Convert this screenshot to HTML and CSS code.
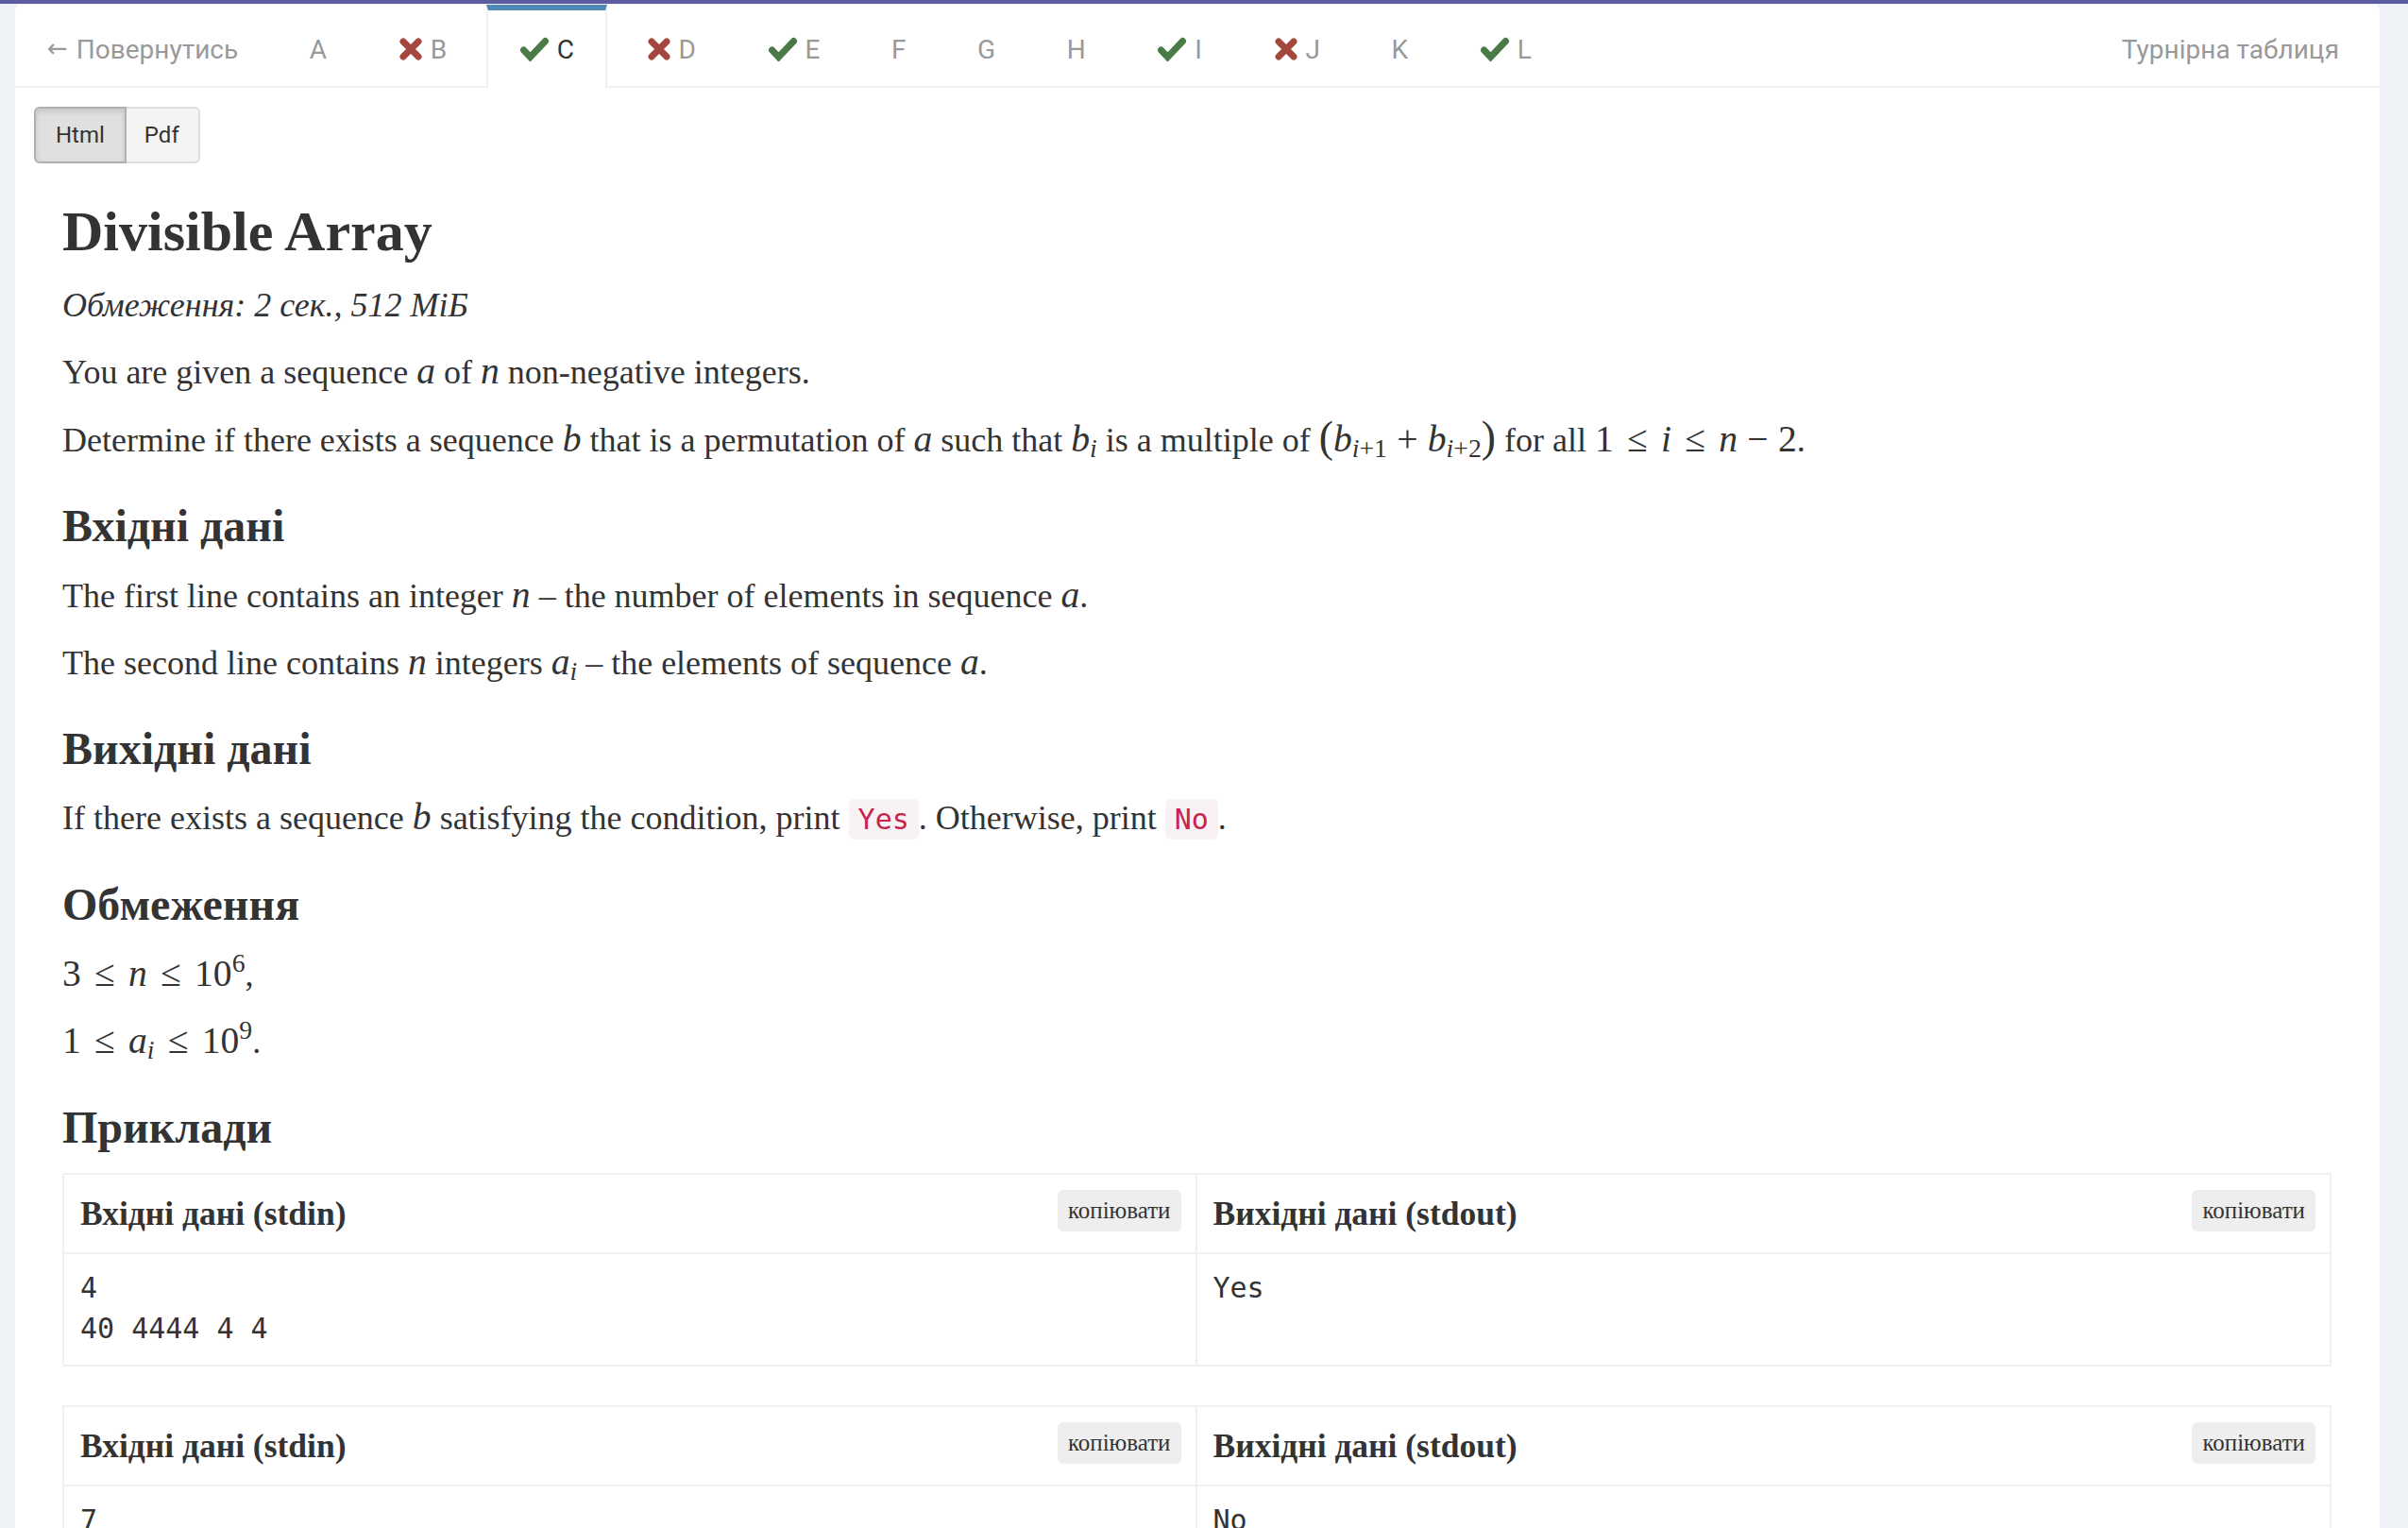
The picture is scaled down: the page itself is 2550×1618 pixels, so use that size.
FILE: index.html
```html
<!DOCTYPE html>
<html lang="uk">
<head>
<meta charset="utf-8">
<title>Divisible Array</title>
<link rel="stylesheet" href="styles.css">
</head>
<body>
<div class="topbar"></div>
<div class="page">
  <div class="card">
    <nav class="tabs">
      <a class="tab back"><span class="arrow">←</span>Повернутись</a>
      <a class="tab">A</a>
      <a class="tab"><svg class="ico ico-x" viewBox="0 0 26 26"><path d="M5 5 L21 21 M21 5 L5 21"/></svg>B</a>
      <a class="tab active"><svg class="ico ico-ok" viewBox="0 0 32 26"><path d="M4.5 14 L11.5 21.5 L27.5 4.5"/></svg>C</a>
      <a class="tab"><svg class="ico ico-x" viewBox="0 0 26 26"><path d="M5 5 L21 21 M21 5 L5 21"/></svg>D</a>
      <a class="tab"><svg class="ico ico-ok" viewBox="0 0 32 26"><path d="M4.5 14 L11.5 21.5 L27.5 4.5"/></svg>E</a>
      <a class="tab">F</a>
      <a class="tab">G</a>
      <a class="tab">H</a>
      <a class="tab"><svg class="ico ico-ok" viewBox="0 0 32 26"><path d="M4.5 14 L11.5 21.5 L27.5 4.5"/></svg>I</a>
      <a class="tab"><svg class="ico ico-x" viewBox="0 0 26 26"><path d="M5 5 L21 21 M21 5 L5 21"/></svg>J</a>
      <a class="tab">K</a>
      <a class="tab"><svg class="ico ico-ok" viewBox="0 0 32 26"><path d="M4.5 14 L11.5 21.5 L27.5 4.5"/></svg>L</a>
      <a class="tab standings">Турнірна таблиця</a>
    </nav>

    <div class="viewbar">
      <div class="btn-group">
        <button class="btn on">Html</button><button class="btn">Pdf</button>
      </div>
    </div>

    <article class="problem">
      <h1>Divisible Array</h1>
      <p class="limits"><em>Обмеження: 2 сек., 512 МіБ</em></p>
      <p>You are given a sequence <span class="math"><i>a</i></span> of <span class="math"><i>n</i></span> non-negative integers.</p>
      <p>Determine if there exists a sequence <span class="math"><i>b</i></span> that is a permutation of <span class="math"><i>a</i></span> such that <span class="math"><i>b</i><sub><i>i</i></sub></span> is a multiple of <span class="math"><span class="paren">(</span><i>b</i><sub><i>i</i>+1</sub><span class="op">+</span><i>b</i><sub><i>i</i>+2</sub><span class="paren">)</span></span> for all <span class="math">1<span class="rel">≤</span><i>i</i><span class="rel">≤</span><i>n</i><span class="op">−</span>2</span>.</p>

      <h2>Вхідні дані</h2>
      <p>The first line contains an integer <span class="math"><i>n</i></span> – the number of elements in sequence <span class="math"><i>a</i></span>.</p>
      <p>The second line contains <span class="math"><i>n</i></span> integers <span class="math"><i>a</i><sub><i>i</i></sub></span> – the elements of sequence <span class="math"><i>a</i></span>.</p>

      <h2>Вихідні дані</h2>
      <p>If there exists a sequence <span class="math"><i>b</i></span> satisfying the condition, print <code class="code">Yes</code>. Otherwise, print <code class="code">No</code>.</p>

      <h2>Обмеження</h2>
      <p><span class="math">3<span class="rel">≤</span><i>n</i><span class="rel">≤</span>10<sup>6</sup></span>,</p>
      <p><span class="math">1<span class="rel">≤</span><i>a</i><sub><i>i</i></sub><span class="rel">≤</span>10<sup>9</sup></span>.</p>

      <h2>Приклади</h2>
      <div class="example">
        <div class="cell hd left"><h3>Вхідні дані (stdin)</h3><button class="copy">копіювати</button></div>
        <div class="cell hd"><h3>Вихідні дані (stdout)</h3><button class="copy">копіювати</button></div>
        <pre class="cell data left">4
40 4444 4 4</pre>
        <pre class="cell data">Yes</pre>
      </div>
      <div class="example">
        <div class="cell hd left"><h3>Вхідні дані (stdin)</h3><button class="copy">копіювати</button></div>
        <div class="cell hd"><h3>Вихідні дані (stdout)</h3><button class="copy">копіювати</button></div>
        <pre class="cell data left">7
1 2 3 4 5 6 7</pre>
        <pre class="cell data">No</pre>
      </div>
    </article>
  </div>
</div>
</body>
</html>
```

FILE: styles.css
```css
* { box-sizing: border-box; }
html, body { margin: 0; padding: 0; }
body {
  background: #eef1f6;
  font-family: "Liberation Serif", "Times New Roman", serif;
  color: #333;
  overflow: hidden;
}
.topbar { height: 4px; background: #5d5ca0; }
.page { padding: 1px 30px 0 16px; }
.card {
  background: #fff;
  border-radius: 6px 6px 0 0;
  min-height: 1700px;
}

/* tabs */
.tabs {
  display: flex;
  align-items: stretch;
  gap: 7.6px;
  height: 88px;
  border-bottom: 2px solid #f0f0f0;
  font-family: Roboto, "Liberation Sans", sans-serif;
  font-size: 28px;
  color: #999;
}
.tab {
  display: flex;
  align-items: center;
  gap: 8px;
  padding: 8px 33px 0;
  border-left: 1px solid transparent;
  border-right: 1px solid transparent;
  white-space: nowrap;
}
.tab.back { padding-left: 33px; gap: 9px; }
.arrow {
  font-family: "DejaVu Sans", sans-serif;
  font-size: 26px;
  line-height: 1;
  margin-top: -2px;
}
.tab.active {
  color: #333;
  background: #fff;
  padding-top: 0;
  margin-bottom: -2px;
  border-top: 6px solid #5189b5;
  border-left: 2px solid #f0f0f0;
  border-right: 2px solid #f0f0f0;
}
.tab.standings { margin-left: auto; margin-right: 9px; }
.ico { height: 26px; fill: none; stroke-width: 7; }
.ico-ok { width: 32px; stroke: #4a7a45; stroke-linecap: round; stroke-linejoin: miter; }
.ico-x { width: 26px; stroke: #a4473f; stroke-linecap: round; }

/* html / pdf switch */
.viewbar { padding: 20px 20px 0; }
.btn-group { display: inline-flex; }
.btn {
  height: 60px;
  font-family: Roboto, "Liberation Sans", sans-serif;
  font-size: 24px;
  color: #333;
  padding: 0 21px;
  border: 2px solid #ddd;
  background: #f4f4f4;
  margin: 0;
}
.btn.on {
  background: #e0e0e0;
  border-color: #b0b0b0;
  box-shadow: inset 0 3px 6px rgba(0,0,0,.12);
  border-radius: 6px 0 0 6px;
}
.btn:last-child { border-left: none; border-radius: 0 6px 6px 0; padding: 0 20px 0 19px; }

/* problem */
.problem { padding: 36px 51px 0 50px; }
.problem h1 {
  font-size: 60px;
  line-height: 72px;
  font-weight: bold;
  margin: 0 0 17px;
}
.problem p {
  font-size: 36px;
  line-height: 51px;
  margin: 0 0 20px;
}
.problem h2 {
  font-size: 48px;
  line-height: 57.6px;
  font-weight: bold;
  margin: 36px 0 20px;
}
.math { font-size: 1.1em; line-height: 1; white-space: nowrap; }
.math i { font-style: italic; }
.math sub, .math sup { font-size: 0.7em; line-height: 0; }
.math sub { vertical-align: -0.22em; }
.math sup { vertical-align: 0.55em; }
.math .op { margin: 0 0.26em; }
.math .rel { margin: 0 0.36em; }
.math .paren { font-size: 1.15em; }

.code {
  font-family: "DejaVu Sans Mono", "Liberation Mono", monospace;
  font-size: 30px;
  color: #c7254e;
  background: #f9f2f4;
  padding: 4px 10px;
  border-radius: 6px;
}

/* examples */
.example {
  display: grid;
  grid-template-columns: 1fr 1fr;
  border: 2px solid #f0f0f0;
  margin: 0 0 41px;
}
.cell.left { border-right: 2px solid #f0f0f0; }
.hd {
  display: flex;
  align-items: center;
  justify-content: space-between;
  height: 84px;
  padding: 0 15px 0 17px;
  border-bottom: 2px solid #f0f0f0;
}
.hd h3 {
  margin: 0;
  font-size: 35.5px;
  font-weight: bold;
  line-height: 1.1;
}
.copy {
  font-family: "Liberation Serif", serif;
  font-size: 25px;
  color: #333;
  background: #eee;
  border: none;
  border-radius: 6px;
  height: 44px;
  padding: 0 11px;
  margin-top: -6px;
}
.data {
  margin: 0;
  padding: 14px 17px 17px;
  font-family: "DejaVu Sans Mono", "Liberation Mono", monospace;
  font-size: 30px;
  line-height: 43px;
  color: #333;
}
```
